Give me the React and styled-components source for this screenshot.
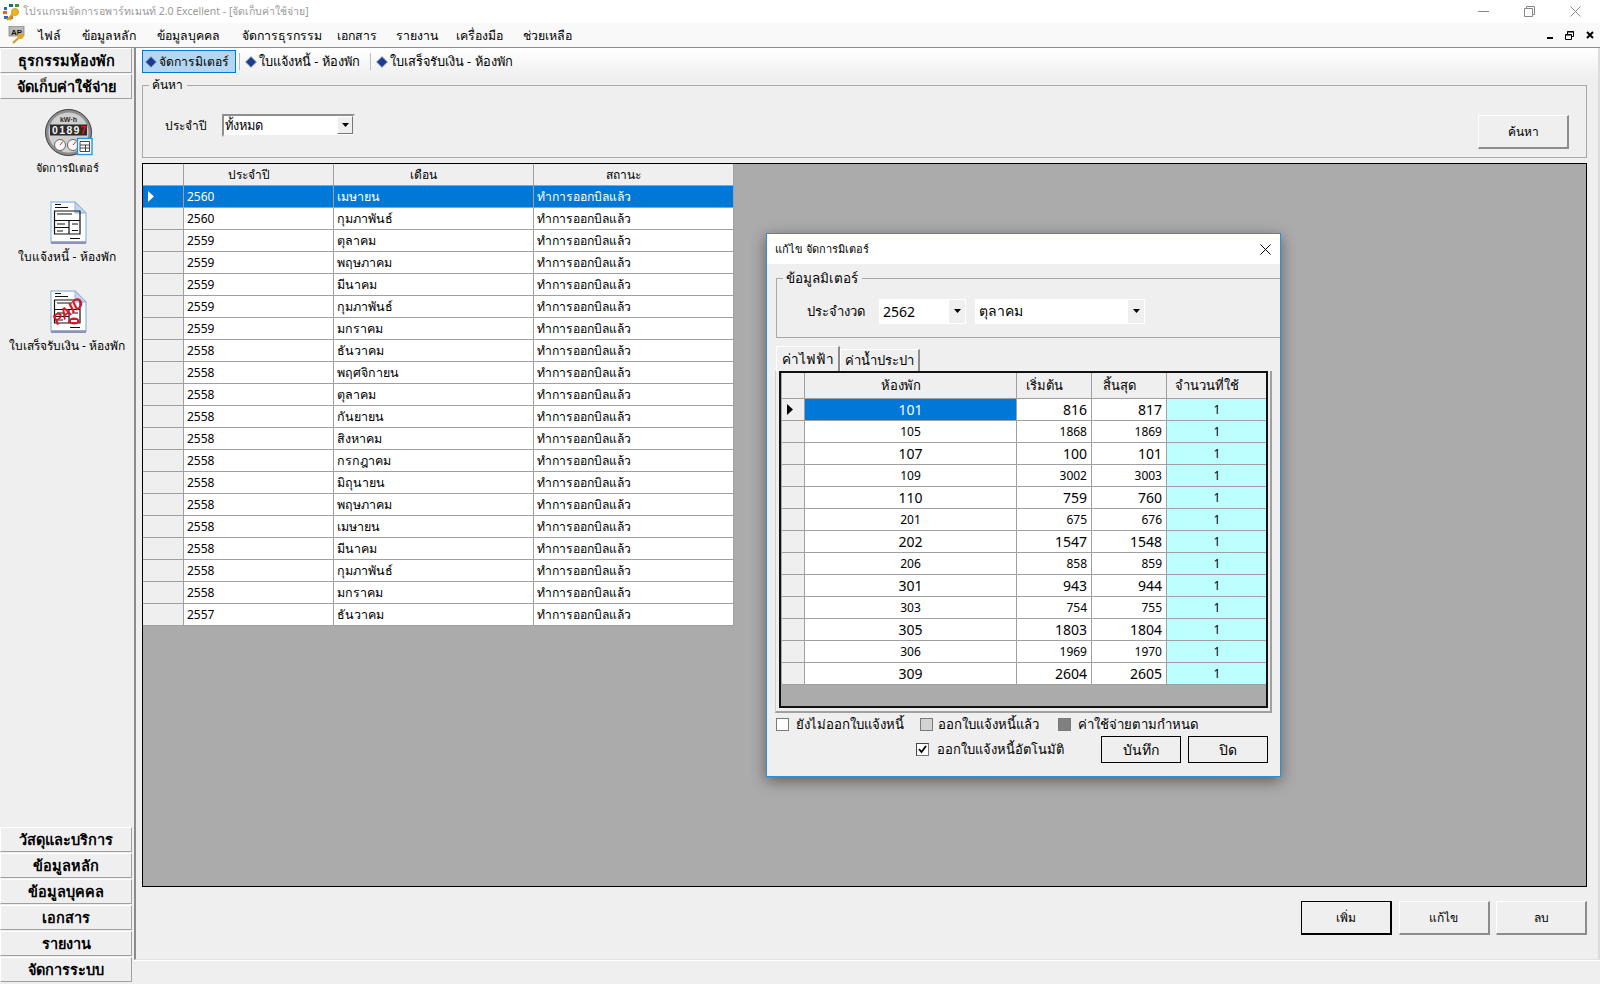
import React from 'react';
import styled, { createGlobalStyle } from 'styled-components';

const GlobalStyle = createGlobalStyle`
    html, body { margin: 0; padding: 0; background: #efefef; }
    body { font-family: "Noto Sans", "Liberation Sans", sans-serif; color: #000; }
    * { box-sizing: border-box; }
`;

const Screen = styled.div`
    position: relative;
    width: 1600px;
    height: 984px;
    overflow: hidden;
    display: flex;
    flex-direction: column;
    background: #efefef;
`;

const TitleBar = styled.div`
    height: 23px;
    flex: none;
    background: #fff;
    display: flex;
    align-items: center;
    padding-left: 2px;
    gap: 3px;
    color: #9a9a9a;
    font-size: 10.5px;
`;

const TitleText = styled.span`
    flex: 1;
`;

const WindowControls = styled.div`
    display: flex;
    align-items: center;
    gap: 35px;
    padding-right: 19px;
`;

const MenuBar = styled.div`
    height: 25px;
    flex: none;
    display: flex;
    align-items: center;
    padding-left: 8px;
    background: #f9f9f9;
    border-bottom: 1px solid #8c8c8c;
    font-size: 12.3px;
`;

const MenuItem = styled.span`
    margin-left: ${p => p.$gap}px;
`;

const MdiControls = styled.div`
    margin-left: auto;
    display: flex;
    align-items: center;
    gap: 12px;
    padding-right: 6px;
`;

const Body = styled.div`
    flex: 1;
    display: flex;
    min-height: 0;
`;

const Sidebar = styled.aside`
    width: 132px;
    flex: none;
    display: flex;
    flex-direction: column;
    gap: 1px;
    padding-bottom: 2px;
`;

const SideButton = styled.div`
    height: 25px;
    flex: none;
    display: flex;
    align-items: center;
    justify-content: center;
    background: #efefef;
    border: 1px solid #fff;
    border-right-color: #a0a0a0;
    border-bottom-color: #a0a0a0;
    font-size: 14.5px;
    font-weight: 700;
`;

const SideList = styled.div`
    flex: 1;
    display: flex;
    flex-direction: column;
    align-items: center;
    padding: 8px 0 0 2px;
    gap: 24px;
`;

const SideItem = styled.div`
    display: flex;
    flex-direction: column;
    align-items: center;
    gap: 3px;
    font-size: ${p => p.$size || 12}px;
    white-space: nowrap;

    svg {
        margin-left: 4px;
    }
`;

const RightColumn = styled.div`
    flex: 1;
    display: flex;
    flex-direction: column;
    min-width: 0;
    margin-left: 2px;
`;

const Workspace = styled.div`
    height: 912px;
    flex: none;
    display: flex;
    flex-direction: column;
    border-left: 2px solid #8c8c8c;
    border-right: 2px solid #dcdcdc;
    border-bottom: 1px solid #e3e3e3;
    padding: 0 11px 0 6px;
`;

const ToolStrip = styled.div`
    height: 29px;
    flex: none;
    margin: 0 -11px 0 -6px;
    padding: 2px 0 0 6px;
    display: flex;
    align-items: flex-start;
    background: linear-gradient(#fff, #efefef);
`;

const ToolButton = styled.div`
    height: 23px;
    display: flex;
    align-items: center;
    gap: 2px;
    padding: 0 6px 0 2px;
    font-size: ${p => (p.$active ? 12.2 : 12.8)}px;
    border: 1px solid ${p => (p.$active ? '#0078d7' : 'transparent')};
    background: ${p => (p.$active ? '#b3d7f3' : 'transparent')};
`;

const ToolSep = styled.div`
    width: 1px;
    height: 17px;
    margin: 3px 2px 0 3px;
    background: #bdbdbd;
`;

const SearchBox = styled.fieldset`
    height: 79px;
    flex: none;
    margin: 2px 0 0;
    padding: 0;
    border: 1px solid #a8a8a8;
    font-size: 12.8px;
`;

const BoxLegend = styled.legend`
    padding: 0 4px 0 3px;
    margin-left: 6px;
    font-size: ${p => p.$size || 12}px;
    line-height: 1;
`;

const SearchRow = styled.div`
    height: 66px;
    display: flex;
    align-items: center;
    padding: 2px 17px 0 22px;
`;

const SearchLabel = styled.span`
    font-size: 12px;
`;

const SearchCombo = styled.div`
    width: 133px;
    height: 23px;
    margin-left: 15px;
    display: flex;
    align-items: center;
    background: #fff;
    border: 2px solid #8f8f8f;
    border-right-color: #efefef;
    border-bottom-color: #efefef;
    padding-left: 1px;
`;

const ComboText = styled.span`
    flex: 1;
`;

const ComboArrow = styled.span`
    width: 16px;
    height: 18px;
    flex: none;
    display: flex;
    align-items: center;
    justify-content: center;
    background: #efefef;
    border: 1px solid #fff;
    border-right-color: #777;
    border-bottom-color: #777;
`;

const SearchButton = styled.button`
    width: 91px;
    height: 34px;
    margin: 0 0 8px auto;
    align-self: flex-end;
    background: #efefef;
    border: 1px solid #fff;
    border-right: 2px solid #8c8c8c;
    border-bottom: 2px solid #8c8c8c;
    font: inherit;
    font-size: 12px;
`;

const DataArea = styled.div`
    height: 724px;
    flex: none;
    margin-top: 5px;
    background: #ababab;
    border: 1px solid #000;
`;

const Table = styled.div`
    width: ${p => p.$width}px;
    display: flex;
    flex-direction: column;
`;

const Row = styled.div`
    height: ${p => p.$height}px;
    flex: none;
    display: grid;
    grid-template-columns: ${p => p.$cols};
    background: #fff;
`;

const HeadCell = styled.div`
    display: flex;
    align-items: center;
    justify-content: center;
    padding-right: 20px;
    background: #efefef;
    border-right: 1px solid #a0a0a0;
    border-bottom: 1px solid #a0a0a0;
    font-size: ${p => p.$size}px;
    white-space: nowrap;
`;

const Cell = styled.div`
    display: flex;
    align-items: center;
    justify-content: ${p => p.$align || 'flex-start'};
    padding: 0 ${p => (p.$align === 'flex-end' ? 4 : 3)}px;
    font-size: ${p => p.$size}px;
    color: ${p => (p.$selected ? '#fff' : '#000')};
    background: ${p => (p.$selected ? '#0078d7' : p.$tint || '#fff')};
    border-right: 1px solid #a0a0a0;
    border-bottom: 1px solid #a0a0a0;
`;

const RowHead = styled.div`
    display: flex;
    align-items: center;
    padding-left: 4px;
    background: ${p => (p.$selected ? '#0078d7' : '#efefef')};
    border-right: 1px solid #a0a0a0;
    border-bottom: 1px solid #a0a0a0;
`;

const Footer = styled.div`
    flex: 1;
    display: flex;
    justify-content: flex-end;
    align-items: flex-start;
    gap: 6.5px;
    padding-top: 14px;
`;

const RaisedButton = styled.button`
    width: 91px;
    height: 34px;
    background: #efefef;
    border: 1px solid ${p => (p.$default ? '#000' : '#fff')};
    border-right: 2px solid ${p => (p.$default ? '#000' : '#8c8c8c')};
    border-bottom: 2px solid ${p => (p.$default ? '#000' : '#8c8c8c')};
    font: inherit;
    font-size: 12px;
`;

const StatusBar = styled.div`
    flex: 1;
    background: #efefef;
    border-top: 1px solid #fff;
`;

const Dialog = styled.div`
    position: absolute;
    left: 766px;
    top: 233px;
    width: 515px;
    height: 544px;
    display: flex;
    flex-direction: column;
    background: #efefef;
    border: 1px solid #2b8fe0;
    box-shadow: 0 4px 14px rgba(0, 0, 0, 0.45);
`;

const DialogTitle = styled.div`
    height: 30px;
    flex: none;
    display: flex;
    align-items: center;
    justify-content: space-between;
    padding: 0 9px 0 8px;
    background: #fff;
    font-size: 11px;
`;

const MeterBox = styled.fieldset`
    height: 66px;
    flex: none;
    margin: 8px 0 0 9px;
    padding: 0;
    border: 1px solid #a8a8a8;
    border-right: none;
`;

const MeterRow = styled.div`
    height: 51px;
    display: flex;
    align-items: center;
    padding-left: 30px;
    font-size: 13px;
`;

const FlatCombo = styled.div`
    width: ${p => p.$width}px;
    height: 25px;
    margin-left: ${p => p.$gap}px;
    display: flex;
    align-items: center;
    padding-left: 4px;
    background: #fff;
    font-size: 14px;
`;

const FlatArrow = styled.span`
    width: 16px;
    height: 23px;
    margin-right: 1px;
    flex: none;
    display: flex;
    align-items: center;
    justify-content: center;
    background: #efefef;
`;

const TabRow = styled.div`
    height: 25px;
    flex: none;
    margin: 8px 0 0 9px;
    display: flex;
    align-items: flex-end;
`;

const Tab = styled.div`
    width: ${p => p.$width}px;
    height: ${p => (p.$active ? 25 : 22)}px;
    display: flex;
    align-items: center;
    justify-content: center;
    padding-bottom: 1px;
    background: #efefef;
    border: 1px solid #fff;
    border-right: 2px solid #8c8c8c;
    border-bottom: none;
    font-size: ${p => (p.$active ? 13.5 : 13)}px;
`;

const TabPanel = styled.div`
    width: 497px;
    height: 342px;
    flex: none;
    margin-left: 8px;
    padding: 0 2px 3px 3px;
    border-right: 2px solid #a0a0a0;
    border-bottom: 2px solid #a0a0a0;
    border-left: 1px solid #d0d0d0;
`;

const DialogData = styled.div`
    height: 100%;
    padding-left: 1px;
    background: #ababab;
    border: 2px solid #111;
    overflow: hidden;
`;

const LegendRow = styled.div`
    display: flex;
    align-items: center;
    height: 22px;
    margin: 0 0 0 9px;
    font-size: 13.2px;
`;

const Swatch = styled.span`
    width: 13px;
    height: 13px;
    flex: none;
    margin: 0 ${p => p.$after}px 0 ${p => p.$before}px;
    background: ${p => p.$fill};
    border: 1px solid #7a7a7a;
`;

const ActionRow = styled.div`
    display: flex;
    align-items: center;
    gap: 7px;
    margin: 1px 0 0 149px;
    font-size: 13px;
`;

const CheckWrap = styled.label`
    display: flex;
    align-items: center;
    gap: 8px;
    margin-right: 30px;
    white-space: nowrap;
`;

const CheckBox = styled.span`
    width: 13px;
    height: 13px;
    display: flex;
    align-items: center;
    justify-content: center;
    background: #fff;
    border: 1px solid #777;
    border-top-color: #444;
    border-left-color: #444;
`;

const FlatButton = styled.button`
    width: 80px;
    height: 27px;
    background: #efefef;
    border: 1px solid #000;
    font: inherit;
    font-size: 14px;
`;

const Caret = ({ color = '#000', size = 9 }) => (
    <svg width={size} height={size + 2} viewBox="0 0 9 11">
        <path d="M1 0 L7 5.5 L1 11 Z" fill={color} />
    </svg>
);

const DownCaret = () => (
    <svg width="7" height="4" viewBox="0 0 7 4">
        <path d="M0 0 H7 L3.5 4 Z" fill="#000" />
    </svg>
);

const Diamond = () => (
    <svg width="12" height="12" viewBox="0 0 13 13">
        <path d="M6.5 0.5 L12.5 6.5 L6.5 12.5 L0.5 6.5 Z" fill="#1d3c8f" stroke="#a9b7d6" />
    </svg>
);

const AppLogo = () => (
    <svg width="18" height="20" viewBox="0 0 18 20">
        <rect x="7" y="2" width="4" height="3" fill="#1f6b6b" />
        <rect x="13" y="2" width="4" height="3" fill="#3a9a3a" />
        <rect x="2" y="5" width="3" height="3" fill="#2a6fb5" />
        <rect x="1" y="9" width="4" height="3" fill="#e8622a" />
        <rect x="2" y="14" width="4" height="3" fill="#2a6fb5" />
        <rect x="8" y="14" width="3" height="3" fill="#e8622a" />
        <circle cx="13" cy="10" r="3.6" fill="#efb320" stroke="#b98512" strokeWidth="0.6" />
        <path d="M11 12 L5 18 M7 16 L9 18" stroke="#dc9f14" strokeWidth="2.2" fill="none" />
    </svg>
);

const MenuLogo = () => (
    <svg width="17" height="18" viewBox="0 0 17 18">
        <rect x="1" y="0" width="15" height="10" fill="#b9b9b9" stroke="#666" strokeWidth="0.6" />
        <text x="3" y="8.5" fontSize="8" fontWeight="700" fontFamily="Liberation Sans" fill="#111">AP</text>
        <circle cx="12.5" cy="10" r="3" fill="#e5a823" />
        <path d="M10.5 12 L5 17" stroke="#d49a1c" strokeWidth="2" />
    </svg>
);

const MeterIcon = () => (
    <svg width="48" height="48" viewBox="0 0 48 48">
        <circle cx="23.5" cy="24.5" r="23" fill="#8d8d8d" stroke="#3a3a3a" />
        <circle cx="23.5" cy="24.5" r="20" fill="#cfcfcf" />
        <text x="23.5" y="14" textAnchor="middle" fontSize="7" fontWeight="700" fontFamily="Liberation Sans" fill="#2a2a2a">kW·h</text>
        <rect x="5" y="16.5" width="37" height="11" fill="#2b2b2b" />
        <text x="7 14.2 21.4 28.6" y="26" fontSize="10.5" fontWeight="700" fontFamily="Liberation Sans" fill="#f4f4f4">0189</text>
        <text x="35.3" y="26" fontSize="10.5" fontWeight="700" fontFamily="Liberation Sans" fill="#e01818">7</text>
        <circle cx="15" cy="37" r="5.5" fill="#f7f7f7" stroke="#666" />
        <path d="M15 37 L18 33.5" stroke="#d22" />
        <circle cx="28" cy="37" r="5.5" fill="#f7f7f7" stroke="#666" />
        <path d="M28 37 L31 33.5" stroke="#d22" />
        <rect x="32.5" y="30.5" width="14.5" height="16" fill="#fff" stroke="#2196e8" strokeWidth="1.4" />
        <path d="M35 33.5 H44.5 V43.5 H35 Z M35 37 H44.5 M35 40 H44.5 M40.5 37 V43.5" stroke="#333" strokeWidth="0.9" fill="none" />
    </svg>
);

const DocLines = () => (
    <g stroke="#111" strokeWidth="1.2" fill="none">
        <path d="M5 3.5 H11 M5 6.5 H18" />
        <path d="M4.5 10 H30 V33 H4.5 Z M4.5 19.5 H30 M4.5 26.5 H19 M19 19.5 V33" />
        <path d="M7 13 H22 M7 23 H15 M22 23 H28 M22 29.5 H28 M7 30 H13 M20 37.5 H30" />
    </g>
);

const DocSheet = () => (
    <>
        <path d="M1 1 H25 L36 12 V41 H1 Z" fill="#fff" stroke="#9fc0e4" strokeWidth="1.4" />
        <path d="M25 1 L36 12 H25 Z" fill="#c4d8ee" stroke="#8fb0d6" />
        <path d="M1 40.5 H36 V43 H1 Z" fill="#8c92b8" />
    </>
);

const BillIcon = () => (
    <svg width="37" height="43" viewBox="0 0 37 43">
        <DocSheet />
        <DocLines />
    </svg>
);

const PaidIcon = () => (
    <svg width="37" height="43" viewBox="0 0 37 43">
        <DocSheet />
        <DocLines />
        <text x="18" y="26" textAnchor="middle" fontSize="15" fontWeight="700" fontStyle="italic" fontFamily="Liberation Sans" fill="#dc1426" transform="rotate(-37 18 21)">PAID</text>
        <ellipse cx="24" cy="31" rx="5.5" ry="3.5" fill="#dc1426" />
        <rect x="21" y="30" width="6" height="2" fill="#fff" />
    </svg>
);

const MinIcon = () => (
    <svg width="11" height="1" viewBox="0 0 11 1"><path d="M0 .5 H11" stroke="#888" /></svg>
);

const RestoreIcon = () => (
    <svg width="11" height="11" viewBox="0 0 11 11">
        <path d="M.5 2.5 H8.5 V10.5 H.5 Z M2.5 2.5 V.5 H10.5 V8.5 H8.5" fill="none" stroke="#888" />
    </svg>
);

const CloseIcon = ({ color = '#888' }) => (
    <svg width="11" height="11" viewBox="0 0 11 11">
        <path d="M.5 .5 L10.5 10.5 M10.5 .5 L.5 10.5" stroke={color} />
    </svg>
);

const MdiMin = () => (
    <svg width="6" height="8" viewBox="0 0 6 8"><path d="M0 7 H6" stroke="#000" strokeWidth="2" /></svg>
);

const MdiRestore = () => (
    <svg width="9" height="9" viewBox="0 0 9 9">
        <path d="M.5 3.5 H6.5 V8.5 H.5 Z M2.5 3 V.5 H8.5 V5.5 H7" fill="none" stroke="#000" />
        <path d="M.5 4 H6.5 M2.5 1 H8.5" stroke="#000" />
    </svg>
);

const MdiClose = () => (
    <svg width="8" height="8" viewBox="0 0 8 8"><path d="M1 1 L7 7 M7 1 L1 7" stroke="#000" strokeWidth="2" /></svg>
);

const menus = [
    ['ไฟล์', 13], ['ข้อมูลหลัก', 20.6], ['ข้อมูลบุคคล', 21.4], ['จัดการธุรกรรม', 21.8],
    ['เอกสาร', 15], ['รายงาน', 19], ['เครื่องมือ', 18], ['ช่วยเหลือ', 20],
];

const bottomButtons = ['วัสดุและบริการ', 'ข้อมูลหลัก', 'ข้อมูลบุคคล', 'เอกสาร', 'รายงาน', 'จัดการระบบ'];

const meterPeriods = [
    ['2560', 'เมษายน'], ['2560', 'กุมภาพันธ์'], ['2559', 'ตุลาคม'], ['2559', 'พฤษภาคม'],
    ['2559', 'มีนาคม'], ['2559', 'กุมภาพันธ์'], ['2559', 'มกราคม'], ['2558', 'ธันวาคม'],
    ['2558', 'พฤศจิกายน'], ['2558', 'ตุลาคม'], ['2558', 'กันยายน'], ['2558', 'สิงหาคม'],
    ['2558', 'กรกฎาคม'], ['2558', 'มิถุนายน'], ['2558', 'พฤษภาคม'], ['2558', 'เมษายน'],
    ['2558', 'มีนาคม'], ['2558', 'กุมภาพันธ์'], ['2558', 'มกราคม'], ['2557', 'ธันวาคม'],
];

const readings = [
    ['101', 816, 817], ['105', 1868, 1869], ['107', 100, 101], ['109', 3002, 3003],
    ['110', 759, 760], ['201', 675, 676], ['202', 1547, 1548], ['206', 858, 859],
    ['301', 943, 944], ['303', 754, 755], ['305', 1803, 1804], ['306', 1969, 1970],
    ['309', 2604, 2605],
];

const mainCols = '41px 150px 200px 200px';
const dialogCols = '23px 212px 75px 75px 101px';

const App = () => {
    return (
        <Screen>
            <GlobalStyle />
            <TitleBar>
                <AppLogo />
                <TitleText>โปรแกรมจัดการอพาร์ทเมนท์ 2.0 Excellent - [จัดเก็บค่าใช้จ่าย]</TitleText>
                <WindowControls>
                    <MinIcon />
                    <RestoreIcon />
                    <CloseIcon />
                </WindowControls>
            </TitleBar>
            <MenuBar>
                <MenuLogo />
                {menus.map(([label, gap]) => (
                    <MenuItem key={label} $gap={gap}>{label}</MenuItem>
                ))}
                <MdiControls>
                    <MdiMin />
                    <MdiRestore />
                    <MdiClose />
                </MdiControls>
            </MenuBar>
            <Body>
                <Sidebar>
                    <SideButton>ธุรกรรมห้องพัก</SideButton>
                    <SideButton>จัดเก็บค่าใช้จ่าย</SideButton>
                    <SideList>
                        <SideItem $size={11}><MeterIcon />จัดการมิเตอร์</SideItem>
                        <SideItem><BillIcon />ใบแจ้งหนี้ - ห้องพัก</SideItem>
                        <SideItem><PaidIcon />ใบเสร็จรับเงิน - ห้องพัก</SideItem>
                    </SideList>
                    {bottomButtons.map(label => (
                        <SideButton key={label}>{label}</SideButton>
                    ))}
                </Sidebar>
                <RightColumn>
                    <Workspace>
                        <ToolStrip>
                            <ToolButton $active><Diamond />จัดการมิเตอร์</ToolButton>
                            <ToolSep />
                            <ToolButton><Diamond />ใบแจ้งหนี้ - ห้องพัก</ToolButton>
                            <ToolSep />
                            <ToolButton><Diamond />ใบเสร็จรับเงิน - ห้องพัก</ToolButton>
                        </ToolStrip>
                        <SearchBox>
                            <BoxLegend>ค้นหา</BoxLegend>
                            <SearchRow>
                                <SearchLabel>ประจำปี</SearchLabel>
                                <SearchCombo>
                                    <ComboText>ทั้งหมด</ComboText>
                                    <ComboArrow><DownCaret /></ComboArrow>
                                </SearchCombo>
                                <SearchButton>ค้นหา</SearchButton>
                            </SearchRow>
                        </SearchBox>
                        <DataArea>
                            <Table $width={591}>
                                <Row $height={22} $cols={mainCols}>
                                    <HeadCell $size={12} />
                                    <HeadCell $size={12}>ประจำปี</HeadCell>
                                    <HeadCell $size={12}>เดือน</HeadCell>
                                    <HeadCell $size={12}>สถานะ</HeadCell>
                                </Row>
                                {meterPeriods.map(([year, month], i) => (
                                    <Row key={year + month} $height={22} $cols={mainCols}>
                                        <RowHead $selected={i === 0}>{i === 0 && <Caret color="#fff" />}</RowHead>
                                        <Cell $size={12} $selected={i === 0}>{year}</Cell>
                                        <Cell $size={12.5} $selected={i === 0}>{month}</Cell>
                                        <Cell $size={12.2} $selected={i === 0}>ทำการออกบิลแล้ว</Cell>
                                    </Row>
                                ))}
                            </Table>
                        </DataArea>
                        <Footer>
                            <RaisedButton $default>เพิ่ม</RaisedButton>
                            <RaisedButton>แก้ไข</RaisedButton>
                            <RaisedButton>ลบ</RaisedButton>
                        </Footer>
                    </Workspace>
                    <StatusBar />
                </RightColumn>
            </Body>
            <Dialog>
                <DialogTitle>
                    แก้ไข จัดการมิเตอร์
                    <CloseIcon color="#000" />
                </DialogTitle>
                <MeterBox>
                    <BoxLegend $size={13.5}>ข้อมูลมิเตอร์</BoxLegend>
                    <MeterRow>
                        ประจำงวด
                        <FlatCombo $width={87} $gap={14}>
                            <ComboText>2562</ComboText>
                            <FlatArrow><DownCaret /></FlatArrow>
                        </FlatCombo>
                        <FlatCombo $width={170} $gap={9}>
                            <ComboText>ตุลาคม</ComboText>
                            <FlatArrow><DownCaret /></FlatArrow>
                        </FlatCombo>
                    </MeterRow>
                </MeterBox>
                <TabRow>
                    <Tab $active $width={64}>ค่าไฟฟ้า</Tab>
                    <Tab $width={80}>ค่าน้ำประปา</Tab>
                </TabRow>
                <TabPanel>
                    <DialogData>
                        <Table $width={486}>
                            <Row $height={26} $cols={dialogCols}>
                                <HeadCell $size={13} />
                                <HeadCell $size={13}>ห้องพัก</HeadCell>
                                <HeadCell $size={13}>เริ่มต้น</HeadCell>
                                <HeadCell $size={13}>สิ้นสุด</HeadCell>
                                <HeadCell $size={13}>จำนวนที่ใช้</HeadCell>
                            </Row>
                            {readings.map(([room, start, end], i) => {
                                const size = i % 2 === 0 ? 14 : 12;
                                return (
                                    <Row key={room} $height={22} $cols={dialogCols}>
                                        <RowHead>{i === 0 && <Caret />}</RowHead>
                                        <Cell $size={size} $align="center" $selected={i === 0}>{room}</Cell>
                                        <Cell $size={size} $align="flex-end">{start}</Cell>
                                        <Cell $size={size} $align="flex-end">{end}</Cell>
                                        <Cell $size={12} $align="center" $tint="#bdffff">1</Cell>
                                    </Row>
                                );
                            })}
                        </Table>
                    </DialogData>
                </TabPanel>
                <LegendRow>
                    <Swatch $fill="#fff" $before={0} $after={7} />
                    ยังไม่ออกใบแจ้งหนี้
                    <Swatch $fill="#d3d3d3" $before={16} $after={5} />
                    ออกใบแจ้งหนี้แล้ว
                    <Swatch $fill="#808080" $before={19} $after={7} />
                    ค่าใช้จ่ายตามกำหนด
                </LegendRow>
                <ActionRow>
                    <CheckWrap>
                        <CheckBox>
                            <svg width="9" height="9" viewBox="0 0 9 9">
                                <path d="M1 4 L3.5 7 L8 1" fill="none" stroke="#000" strokeWidth="1.8" />
                            </svg>
                        </CheckBox>
                        ออกใบแจ้งหนี้อัตโนมัติ
                    </CheckWrap>
                    <FlatButton>บันทึก</FlatButton>
                    <FlatButton>ปิด</FlatButton>
                </ActionRow>
            </Dialog>
        </Screen>
    );
};

export default App;
